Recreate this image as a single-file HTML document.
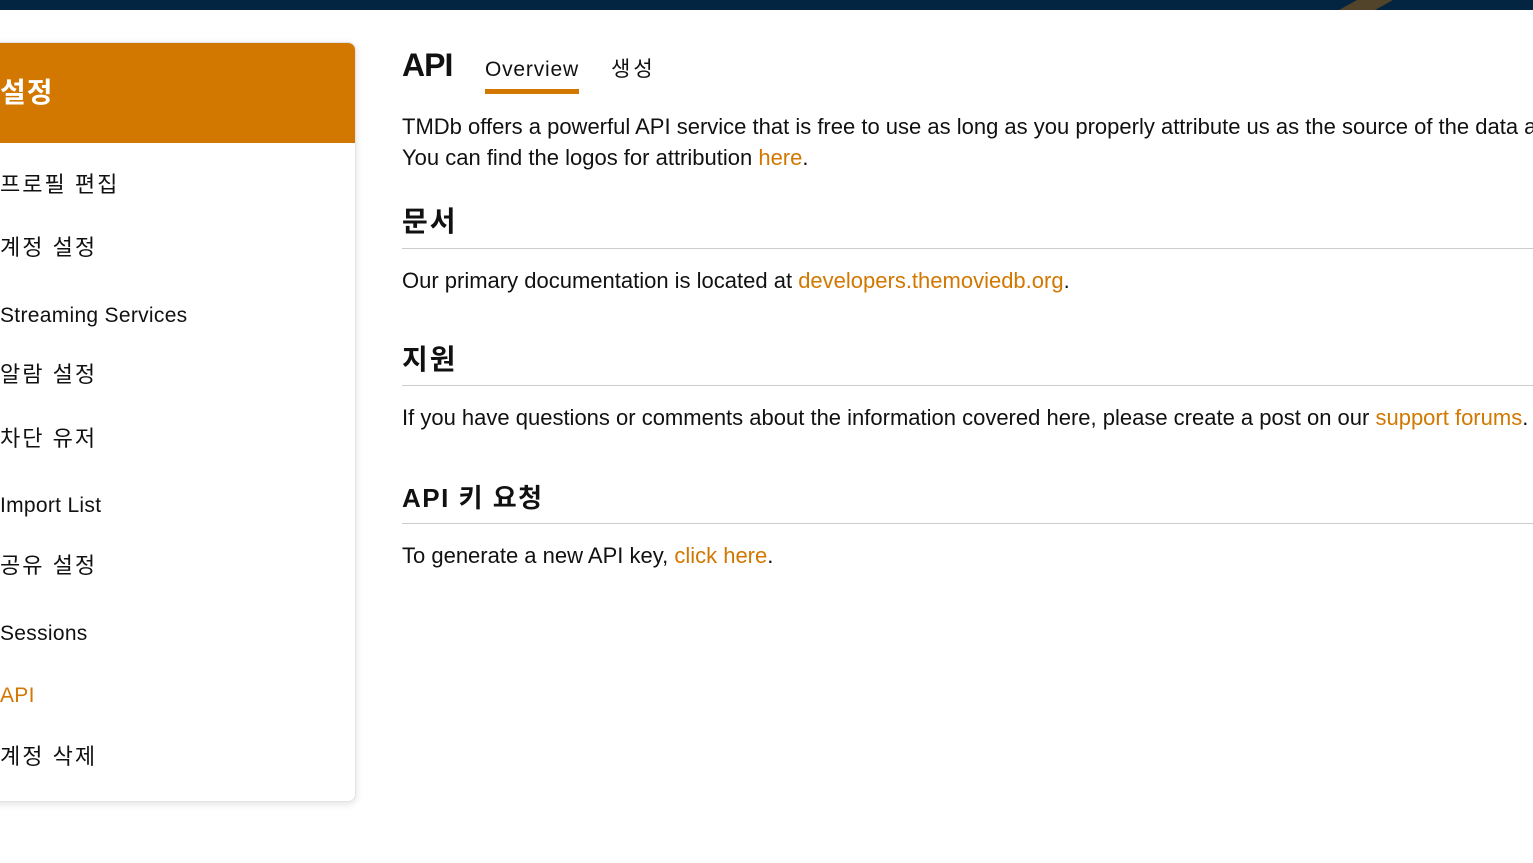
<!DOCTYPE html>
<html><head><meta charset="utf-8"><style>
html,body{margin:0;padding:0;width:1533px;height:863px;overflow:hidden;background:#fff;}
body{font-family:"Liberation Sans","Noto Sans CJK KR",sans-serif;color:#111;position:relative;}
.a{position:absolute;white-space:nowrap;line-height:30px;}
.o{color:#d27800;}
.t{font-size:22px;letter-spacing:0px;}
.h{font-size:28px;font-weight:bold;letter-spacing:2px;}
.hr{position:absolute;left:402px;right:0;height:1px;background:#ccc;}
.s{font-size:21px;left:0;letter-spacing:0.3px;}
.k{font-size:22px;letter-spacing:2px;}
.clip{position:absolute;left:0;top:0;width:1533px;height:863px;overflow:hidden;}
</style></head><body>
<div class="clip">
<div style="position:absolute;left:0;top:0;width:1533px;height:10px;background:#032541;"></div>
<div style="position:absolute;left:1339px;top:0;width:54px;height:10px;background:#52442b;clip-path:polygon(18px 0,54px 0,36px 10px,0 10px);"></div>

<div style="position:absolute;left:-10px;top:42px;width:366px;height:760px;border-radius:8px;background:#fff;box-shadow:0 2px 8px rgba(0,0,0,0.12);border:1px solid #e3e3e3;box-sizing:border-box;overflow:hidden;">
<div style="height:100px;background:#d27800;"></div>
</div>
<div class="a" style="left:0;top:75px;line-height:36px;font-size:28px;font-weight:bold;color:#fff;letter-spacing:1px;">설정</div>
<div class="a s k" style="top:170px">프로필 편집</div>
<div class="a s k" style="top:233px">계정 설정</div>
<div class="a s" style="top:301px">Streaming Services</div>
<div class="a s k" style="top:360px">알람 설정</div>
<div class="a s k" style="top:424px">차단 유저</div>
<div class="a s" style="top:491px">Import List</div>
<div class="a s k" style="top:551px">공유 설정</div>
<div class="a s" style="top:619px">Sessions</div>
<div class="a s o" style="top:681px">API</div>
<div class="a s k" style="top:742px">계정 삭제</div>

<div class="a" style="left:402px;top:47px;line-height:36px;font-size:32px;font-weight:bold;letter-spacing:-1px;">API</div>
<div class="a" style="left:485px;top:55px;font-size:21px;letter-spacing:0.8px;">Overview</div>
<div style="position:absolute;left:485px;top:89px;width:94px;height:5px;background:#d27800;"></div>
<div class="a" style="left:611px;top:55px;font-size:21px;letter-spacing:3px;">생성</div>

<div class="a t" style="left:402px;top:112px">TMDb offers a powerful API service that is free to use as long as you properly attribute us as the source of the data and/or images.</div>
<div class="a t" style="left:402px;top:143px">You can find the logos for attribution <span class="o">here</span>.</div>

<div class="a h" style="left:402px;top:207px">문서</div>
<div class="hr" style="top:248px"></div>
<div class="a t" style="left:402px;top:266px">Our primary documentation is located at <span class="o">developers.themoviedb.org</span>.</div>

<div class="a h" style="left:402px;top:345px">지원</div>
<div class="hr" style="top:385px"></div>
<div class="a t" style="left:402px;top:403px">If you have questions or comments about the information covered here, please create a post on our <span class="o">support forums</span>.</div>

<div class="a h" style="left:402px;top:483px;font-size:26px;letter-spacing:1.5px">API 키 요청</div>
<div class="hr" style="top:523px"></div>
<div class="a t" style="left:402px;top:541px">To generate a new API key, <span class="o">click here</span>.</div>
</div>
</body></html>
